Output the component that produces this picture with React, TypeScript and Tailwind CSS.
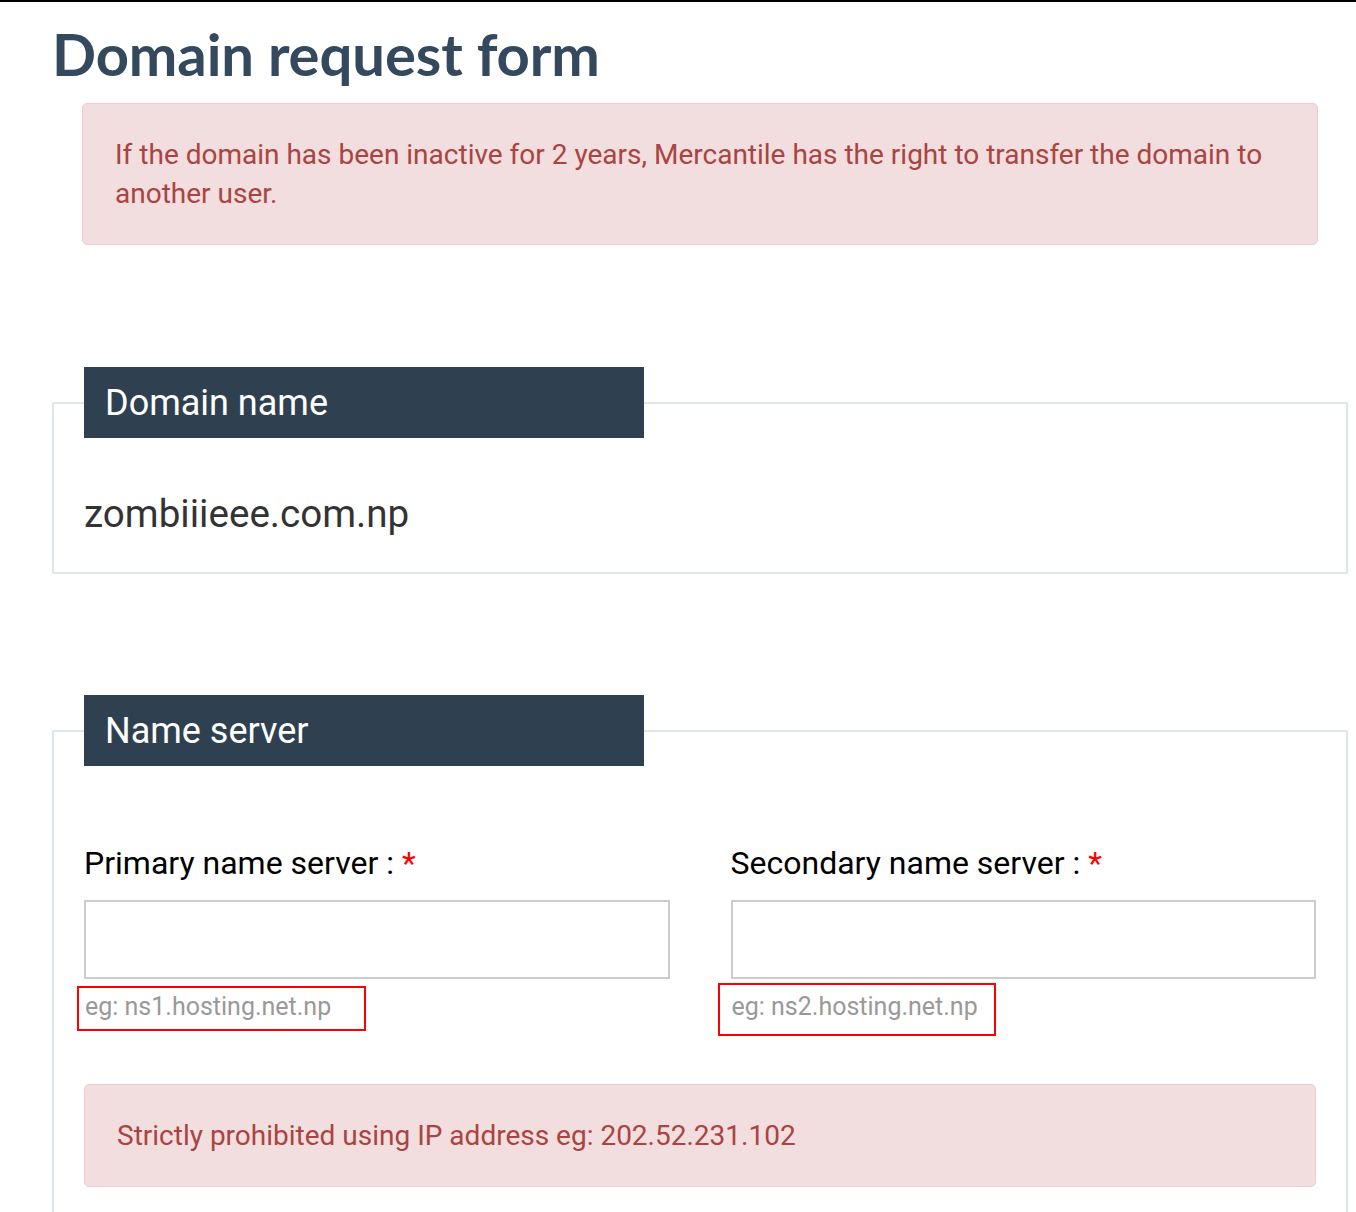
import React from 'react';

const Alert = ({ children, className = '' }: { children: React.ReactNode; className?: string }) => (
  <div
    className={`rounded-[5px] border border-[#ebccd1] bg-[#f2dede] px-[32px] py-[31px] text-[28px] leading-[39px] text-[#a94442] ${className}`}
  >
    {children}
  </div>
);

const Section = ({ title, children }: { title: string; children: React.ReactNode }) => (
  <fieldset className="border-2 border-[#dde6ee] px-[30px]">
    <legend className="flex h-[71px] w-[560px] items-center bg-[#2f4151] px-[21px] text-[36px] text-white">
      {title}
    </legend>
    {children}
  </fieldset>
);

const ServerField = ({ label, hint, boxClass }: { label: string; hint: string; boxClass: string }) => (
  <div>
    <label className="block text-[32px] leading-[45px] text-black">
      {label} <span className="text-[#ff0000]">*</span>
    </label>
    <input
      type="text"
      className="mt-[14px] block h-[79px] w-full border-2 border-[#cccccc] bg-white px-3 text-[26px] outline-none"
    />
    <div className="relative mt-[10px] text-[25px] leading-[36px] text-[#999999]">
      <span className="pl-px">{hint}</span>
      <span className={`pointer-events-none absolute border-2 border-[#ff0000] ${boxClass}`} />
    </div>
  </div>
);

export default function App() {
  return (
    <div
      className="min-h-[1212px] border-t-2 border-black bg-white pb-[40px] pl-[52px] pr-[8px]"
      style={{ fontFamily: 'Roboto, "Liberation Sans", sans-serif' }}
    >
      <h1
        className="pt-[17px] text-[58px] font-bold leading-[70px] tracking-[-0.1px] text-[#34495e]"
        style={{ fontFamily: 'Lato, "Liberation Sans", sans-serif' }}
      >
        Domain request form
      </h1>

      <div className="px-[30px] pt-[14px]">
        <Alert>
          If the domain has been inactive for 2 years, Mercantile has the right to transfer the domain to
          another user.
        </Alert>
      </div>

      <div className="mt-[122px]">
        <Section title="Domain name">
          <div className="pb-[35px] pt-[53px] text-[38.6px] leading-[46px] text-[#333333]">zombiiieee.com.np</div>
        </Section>
      </div>

      <div className="mt-[121px]">
        <Section title="Name server">
          <div className="grid grid-cols-2 gap-x-[61px] pt-[75px]">
            <ServerField
              label="Primary name server :"
              hint="eg: ns1.hosting.net.np"
              boxClass="-left-[7px] -top-[3px] h-[45px] w-[289px]"
            />
            <ServerField
              label="Secondary name server :"
              hint="eg: ns2.hosting.net.np"
              boxClass="-left-[13px] -top-[6px] h-[53px] w-[278px]"
            />
          </div>
          <Alert className="mb-[40px] mt-[59px]">Strictly prohibited using IP address eg: 202.52.231.102</Alert>
        </Section>
      </div>
    </div>
  );
}
